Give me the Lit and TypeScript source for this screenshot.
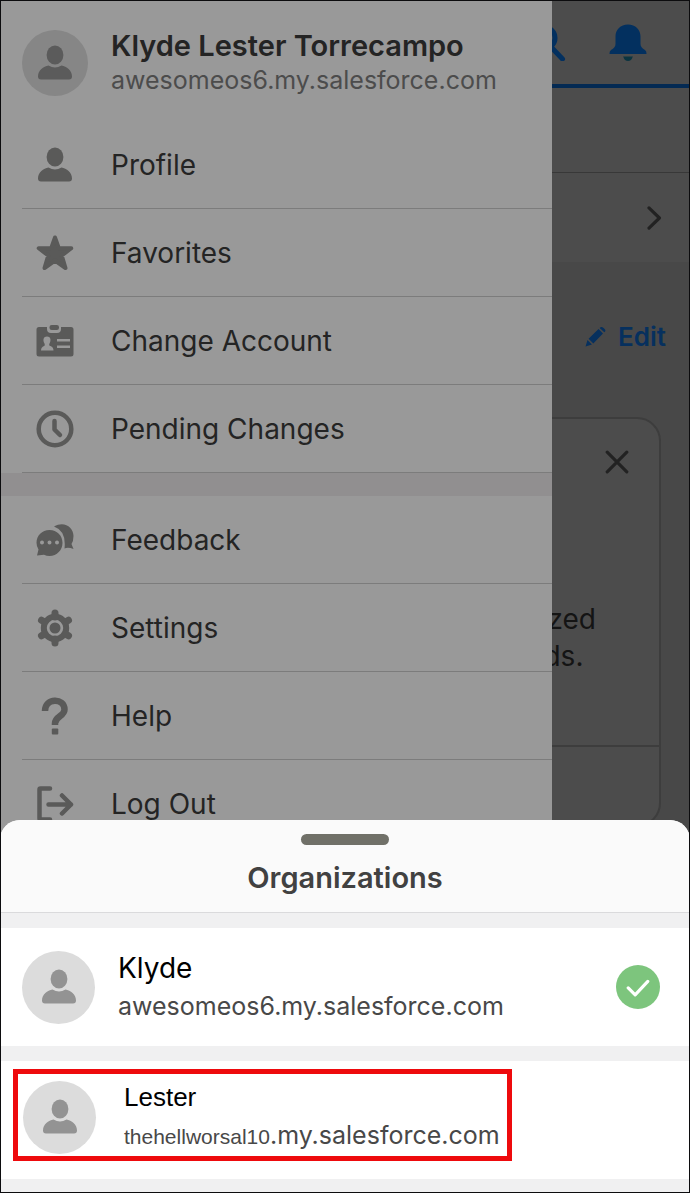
import { LitElement, html, css, svg } from "lit";
import type { TemplateResult } from "lit";
import { customElement, property, state } from "lit/decorators.js";

const glyphs: Record<string, TemplateResult> = {
  person: svg`
    <ellipse cx="19" cy="11" rx="8.4" ry="9.4"/>
    <path d="M2 32.5C2 26.5 7.5 22.6 12.5 21.6Q19 25.4 25.5 21.6C30.5 22.6 36 26.5 36 32.5Q36 35.5 33 35.5H5Q2 35.5 2 32.5Z"/>`,
  star: svg`
    <path stroke="currentColor" stroke-width="4" stroke-linejoin="round"
      d="M19 3.500L22.800 14.200H35.300L25.800 21.500L29.500 34L19 26.500L8.500 34L12.200 21.500L2.700 14.200H15.200Z"/>`,
  badge: svg`
    <path fill-rule="evenodd" d="M3 5H11V7Q11 11 15 11H21Q25 11 25 7V5H35Q37.500 5 37.500 7.500V32Q37.500 34.500 35 34.500H3Q.5 34.500 .5 32V7.500Q.5 5 3 5ZM11 14.500C7.500 14.500 6.500 18 8.500 21.500Q9.500 23.500 8 24Q5 25 5 28.500H17.500Q17.500 25 14.500 24Q12.500 23.500 13.500 21.500C15.500 18 14.500 14.500 11 14.500ZM21 17V19.500H34V17ZM21 23.500V26H34V23.500Z"/>
    <rect x="13.500" y="3" width="9.500" height="5" rx="2.200"/>`,
  clock: svg`
    <g fill="none" stroke="currentColor" stroke-width="4.500">
      <circle cx="19" cy="19" r="16.300"/>
      <path stroke-linecap="round" stroke-linejoin="round" d="M18.500 11V19.500L24 25"/>
    </g>`,
  feedback: svg`
    <path d="M18 5.500C28 -.5 37.500 6 37.500 15Q37.500 20 35.500 23L37.500 28Q32 26 28.500 27.500Q30.500 10 18 5.500Z"/>
    <path fill-rule="evenodd" d="M13.500 9C21 9 26.500 14.500 26.500 21.800S21 35 13.500 35Q10.500 35 8 33.800L1 34.500L2.500 28.500Q.5 25.500 .5 21.800C.5 14.500 6 9 13.500 9ZM6 19.500A2 2 0 1 0 6.010 23.500A2 2 0 1 0 6 19.500ZM13.500 19.500A2 2 0 1 0 13.510 23.500A2 2 0 1 0 13.500 19.500ZM21 19.500A2 2 0 1 0 21.010 23.500A2 2 0 1 0 21 19.500Z"/>`,
  gear: svg`
    <g fill="none" stroke="currentColor">
      <circle cx="19" cy="19" r="11.200" stroke-width="6"/>
      <path stroke-width="7" stroke-linecap="round" d="M19 4V8M19 30V34M5.500 11.200L8.500 13M29.500 25L32.500 26.800M32.500 11.200L29.500 13M8.500 25L5.500 26.800"/>
    </g>
    <circle cx="19" cy="19" r="5.500"/>`,
  help: svg`
    <path fill="none" stroke="currentColor" stroke-width="6.500" d="M9 14C9 .5 28.500 .5 28.500 12.500C28.500 19.500 19 19 19 26.500V28"/>
    <rect x="15.800" y="31.500" width="6.500" height="6" rx="1"/>`,
  logout: svg`
    <g fill="none" stroke="currentColor" stroke-width="4.500" stroke-linecap="round" stroke-linejoin="round">
      <path d="M14 3.500H4.500Q3.500 3.500 3.500 4.500V33.500Q3.500 34.500 4.500 34.500H14"/>
      <path d="M12.500 19.500H35M26 10.500L35 19.500L26 28.500"/>
    </g>`,
  search: svg`
    <g fill="none" stroke="currentColor" stroke-width="5" stroke-linecap="round">
      <circle cx="13" cy="15" r="11"/>
      <path d="M21.500 25.500L31.500 36"/>
    </g>`,
  bell: svg`
    <path d="M19 1.500C26.500 1.500 31.500 6.500 31.500 13.500V21Q31.500 24.500 36 27Q37.800 28.500 37.500 31H.5Q.2 28.500 2 27Q6.500 24.500 6.500 21V13.500C6.500 6.500 11.500 1.500 19 1.500Z"/>
    <path fill="#0b3440" d="M14.200 33.500H23.800Q22.500 38 19 38T14.200 33.500Z"/>`,
  chevron: svg`
    <path fill="none" stroke="currentColor" stroke-width="5" stroke-linecap="round" stroke-linejoin="round" d="M9.500 3L26 19L9.500 35"/>`,
  pencil: svg`
    <path d="M1 37L4.500 25.500L12.500 33.500ZM6.500 23L24.500 5.500L32.500 13.500L15 31.500ZM26.500 3.500Q29.500 0 33 3L35.500 5.500Q38.500 8.500 35 11.500Z"/>`,
  close: svg`
    <path fill="none" stroke="currentColor" stroke-width="5" stroke-linecap="round" d="M3.500 3.500L34.500 34.500M34.500 3.500L3.500 34.500"/>`,
  check: svg`
    <path fill="none" stroke="currentColor" stroke-width="5" stroke-linecap="round" stroke-linejoin="round" d="M3.500 20.500L14.500 31.500L34.500 10"/>`,
};

@customElement("ui-icon")
class UiIcon extends LitElement {
  @property() name = "";
  static styles = css`
    :host {
      display: block;
      flex: none;
      width: 38px;
      height: 38px;
    }
    .glyph {
      display: block;
      width: 100%;
      height: 100%;
      fill: currentColor;
    }
  `;
  render() {
    return html`<svg class="glyph" viewBox="0 0 38 38" aria-hidden="true">${glyphs[this.name]}</svg>`;
  }
}

const primaryItems = [
  { icon: "person", label: "Profile" },
  { icon: "star", label: "Favorites" },
  { icon: "badge", label: "Change Account" },
  { icon: "clock", label: "Pending Changes" },
];

const secondaryItems = [
  { icon: "feedback", label: "Feedback" },
  { icon: "gear", label: "Settings" },
  { icon: "help", label: "Help" },
  { icon: "logout", label: "Log Out" },
];

@customElement("app-root")
class AppRoot extends LitElement {
  @state() private active = "Klyde";

  static styles = css`
    :host {
      display: block;
      font-family: Inter, "Liberation Sans", sans-serif;
      font-size: 28px;
      line-height: 35px;
    }
    button {
      margin: 0;
      padding: 0;
      border: 0;
      background: none;
      color: inherit;
      font: inherit;
      text-align: left;
      cursor: pointer;
    }
    h2,
    p {
      margin: 0;
    }
    .screen {
      position: relative;
      display: grid;
      grid-template-columns: minmax(0, 1fr);
      min-height: 100vh;
      overflow: hidden;
      background: #484848;
    }
    .screen::after {
      content: "";
      position: absolute;
      inset: 0;
      border: 1px solid #0c0c0e;
      pointer-events: none;
    }
    .page,
    .drawer,
    .sheet {
      grid-area: 1 / 1;
    }

    .page {
      display: flex;
      flex-direction: column;
      color: #222;
    }
    .topbar {
      display: flex;
      justify-content: flex-end;
      align-items: center;
      gap: 40px;
      box-sizing: border-box;
      height: 88px;
      padding-right: 43px;
      border-bottom: 4px solid #042a53;
      background: #4c4c4c;
      color: #03305f;
    }
    .strip {
      height: 84px;
      border-bottom: 1px solid #383838;
      background: #4c4c4c;
    }
    .link-row {
      display: flex;
      justify-content: flex-end;
      align-items: center;
      height: 89px;
      padding-right: 23px;
      background: #4c4c4c;
    }
    .small {
      width: 24px;
      height: 24px;
    }
    .edit-row {
      display: flex;
      justify-content: flex-end;
      padding: 57px 24px 0 0;
    }
    .edit {
      display: flex;
      align-items: center;
      gap: 12px;
      color: #06305e;
      font-size: 26px;
      font-weight: 600;
    }
    .pencil {
      width: 21px;
      height: 21px;
    }
    .card {
      display: flex;
      flex-direction: column;
      align-items: flex-end;
      margin: 63px 29px 0;
      border: 2px solid #3d3d3d;
      border-radius: 24px;
      background: #4c4c4c;
    }
    .dismiss {
      margin: 31px 30px 0 0;
    }
    .card-text {
      padding: 127px 63px 70px 0;
      color: #141414;
      line-height: 37px;
      text-indent: 4px;
    }
    .card-foot {
      align-self: stretch;
      height: 78px;
      border-top: 2px solid #3d3d3d;
    }

    .drawer {
      width: 80%;
      background: #999;
      color: #242424;
    }
    .account {
      display: flex;
      gap: 23px;
      box-sizing: border-box;
      height: 121px;
      padding: 28px 0 0 22px;
    }
    .avatar {
      display: flex;
      flex: none;
      justify-content: center;
      align-items: center;
      width: 73px;
      height: 73px;
      border-radius: 50%;
      background: #dcdcdc;
      color: #939393;
    }
    .avatar-dim {
      width: 66px;
      height: 66px;
      margin-top: 2px;
      background: #868686;
      color: #5b5b5b;
    }
    .name {
      font-size: 29px;
      font-weight: 600;
    }
    .domain {
      font-size: 25px;
    }
    .account .domain {
      color: #4c4c4c;
    }
    .menu {
      display: flex;
      flex-direction: column;
      padding-left: 22px;
    }
    .menu-item {
      display: flex;
      align-items: center;
      gap: 23px;
      box-sizing: border-box;
      height: 88px;
      border-bottom: 1px solid #7c7c7c;
      line-height: 36px;
    }
    .menu-icon {
      display: flex;
      justify-content: center;
      width: 66px;
      color: #5a5a59;
    }
    .divider {
      height: 23px;
      background: #918f90;
    }

    .sheet {
      align-self: end;
      display: flex;
      flex-direction: column;
      gap: 15px;
      padding-bottom: 14px;
      border-radius: 20px 20px 0 0;
      background: #f0f0f1;
      overflow: hidden;
    }
    .sheet-head {
      display: flex;
      flex-direction: column;
      align-items: center;
      gap: 15px;
      box-sizing: border-box;
      height: 93px;
      padding-top: 14px;
      border-bottom: 1px solid #dadadc;
      background: #fafafa;
      color: #414141;
    }
    .grabber {
      width: 88px;
      height: 11px;
      border-radius: 6px;
      background: #707068;
    }
    .title {
      font-size: 29px;
      font-weight: 600;
    }
    .org {
      display: flex;
      align-items: center;
      gap: 23px;
      height: 118px;
      padding: 0 30px 0 22px;
      background: #fff;
    }
    .org-name {
      color: #000;
    }
    .org-lines {
      display: grid;
      flex: 1;
      gap: 3px;
      color: #484848;
    }
    .selected {
      display: flex;
      justify-content: center;
      align-items: center;
      width: 44px;
      height: 44px;
      border-radius: 50%;
      background: #7dc57d;
      color: #fff;
    }
    .org-slot {
      display: flex;
      align-items: flex-start;
      box-sizing: border-box;
      height: 118px;
      padding: 8px 13px;
      background: #fff;
    }
    .marked {
      display: flex;
      align-items: center;
      gap: 28px;
      padding: 6px 7px 2px 5px;
      border: 5px solid #ee0a0d;
    }
    .marked .org-name {
      font-family: "Liberation Sans", Arial, sans-serif;
      font-size: 26px;
    }
    .host {
      font-family: "Liberation Sans", Arial, sans-serif;
      font-size: 21px;
    }
  `;

  private menu(items: { icon: string; label: string }[]) {
    return html`<nav class="menu">
      ${items.map(
        (item) => html`<button class="menu-item">
          <span class="menu-icon"><ui-icon name=${item.icon}></ui-icon></span>
          <span>${item.label}</span>
        </button>`
      )}
    </nav>`;
  }

  render() {
    return html`<div class="screen">
      <main class="page">
        <header class="topbar">
          <button aria-label="Search"><ui-icon name="search"></ui-icon></button>
          <button aria-label="Notifications"><ui-icon name="bell"></ui-icon></button>
        </header>
        <div class="strip"></div>
        <div class="link-row">
          <button aria-label="Open"><ui-icon class="small" name="chevron"></ui-icon></button>
        </div>
        <div class="edit-row">
          <button class="edit"><ui-icon class="pencil" name="pencil"></ui-icon>Edit</button>
        </div>
        <section class="card">
          <button class="dismiss" aria-label="Dismiss"><ui-icon class="small" name="close"></ui-icon></button>
          <p class="card-text">zed<br />ds.</p>
          <div class="card-foot"></div>
        </section>
      </main>

      <aside class="drawer">
        <div class="account">
          <span class="avatar avatar-dim"><ui-icon name="person"></ui-icon></span>
          <div>
            <p class="name">Klyde Lester Torrecampo</p>
            <p class="domain">awesomeos6.my.salesforce.com</p>
          </div>
        </div>
        ${this.menu(primaryItems)}
        <div class="divider"></div>
        ${this.menu(secondaryItems)}
      </aside>

      <section class="sheet" aria-label="Organizations">
        <header class="sheet-head">
          <span class="grabber"></span>
          <h2 class="title">Organizations</h2>
        </header>
        <button class="org" @click=${() => (this.active = "Klyde")}>
          <span class="avatar"><ui-icon name="person"></ui-icon></span>
          <span class="org-lines">
            <span class="org-name">Klyde</span>
            <span class="domain">awesomeos6.my.salesforce.com</span>
          </span>
          ${this.active === "Klyde"
            ? html`<span class="selected"><ui-icon class="small" name="check"></ui-icon></span>`
            : null}
        </button>
        <div class="org-slot">
          <button class="marked" @click=${() => (this.active = "Lester")}>
            <span class="avatar"><ui-icon name="person"></ui-icon></span>
            <span class="org-lines">
              <span class="org-name">Lester</span>
              <span class="domain"><span class="host">thehellworsal10</span>.my.salesforce.com</span>
            </span>
          </button>
        </div>
      </section>
    </div>`;
  }
}
